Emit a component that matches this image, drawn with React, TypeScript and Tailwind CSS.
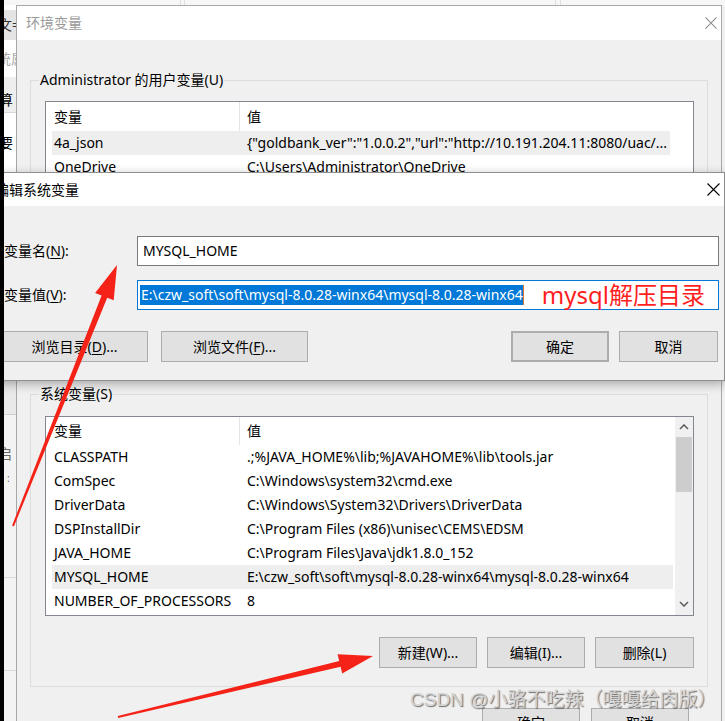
import React from 'react';

const ui = "font-['Noto_Sans','Noto_Sans_CJK_SC',sans-serif]";

const XIcon = ({ color = '#000', size = 13 }: { color?: string; size?: number }) => (
  <svg width={size} height={size} viewBox="0 0 13 13">
    <path d="M0.5 0.5 L12.5 12.5 M12.5 0.5 L0.5 12.5" stroke={color} strokeWidth="1.1" fill="none" />
  </svg>
);

const Chevron = ({ up }: { up?: boolean }) => (
  <svg width="10" height="6" viewBox="0 0 10 6">
    <polyline points={up ? '1,5 5,1 9,5' : '1,1 5,5 9,1'} stroke="#606060" strokeWidth="1.6" fill="none" />
  </svg>
);

const Btn = ({ children, className = '' }: { children: React.ReactNode; className?: string }) => (
  <div className={`flex items-center justify-center bg-[#e1e1e1] border border-[#adadad] text-[14px] leading-[18px] text-black ${className}`}>
    {children}
  </div>
);

type Row = { name: string; value: string; active?: boolean };

const userVars: Row[] = [
  { name: '4a_json', value: '{"goldbank_ver":"1.0.0.2","url":"http://10.191.204.11:8080/uac/...', active: true },
  { name: 'OneDrive', value: 'C:\\Users\\Administrator\\OneDrive' },
  { name: 'Path', value: 'C:\\Users\\Administrator\\AppData\\Local\\Microsoft\\WindowsApps;' },
  { name: 'TEMP', value: 'C:\\Users\\Administrator\\AppData\\Local\\Temp' },
];

const sysVars: Row[] = [
  { name: 'CLASSPATH', value: '.;%JAVA_HOME%\\lib;%JAVAHOME%\\lib\\tools.jar' },
  { name: 'ComSpec', value: 'C:\\Windows\\system32\\cmd.exe' },
  { name: 'DriverData', value: 'C:\\Windows\\System32\\Drivers\\DriverData' },
  { name: 'DSPInstallDir', value: 'C:\\Program Files (x86)\\unisec\\CEMS\\EDSM' },
  { name: 'JAVA_HOME', value: 'C:\\Program Files\\Java\\jdk1.8.0_152' },
  { name: 'MYSQL_HOME', value: 'E:\\czw_soft\\soft\\mysql-8.0.28-winx64\\mysql-8.0.28-winx64', active: true },
  { name: 'NUMBER_OF_PROCESSORS', value: '8' },
];

const VarList = ({ rows, headerH, scroll }: { rows: Row[]; headerH: string; scroll?: boolean }) => (
  <div className="flex h-[200px] border border-[#828790] bg-white overflow-hidden text-[14px] leading-[18px] text-black">
    <div className="flex-1 flex flex-col min-w-0">
      <div className={`flex items-stretch ${headerH}`}>
        <div className="w-[194px] pl-[8px] flex items-center border-r border-[#e5e5e5]">变量</div>
        <div className="pl-[7px] flex items-center">值</div>
      </div>
      {rows.map((r) => (
        <div key={r.name} className={`flex h-[24px] items-center ml-[6px] mr-[2px] whitespace-nowrap ${r.active ? 'bg-[#eeeeee]' : ''}`}>
          <div className="w-[188px] pl-[2px]">{r.name}</div>
          <div className="pl-[7px]">{r.value}</div>
        </div>
      ))}
    </div>
    {scroll ? (
      <div className="w-[18px] bg-[#f0f0f0] flex flex-col">
        <div className="h-[20px] flex items-center justify-center"><Chevron up /></div>
        <div className="h-[55px] mx-[1px] bg-[#cdcdcd]" />
        <div className="flex-1" />
        <div className="h-[22px] flex items-center justify-center"><Chevron /></div>
      </div>
    ) : (
      <div className="w-[21px]" />
    )}
  </div>
);

const BackWindow = () => (
  <>
    {/* strip above the windows */}
    <div className="absolute left-0 top-0 right-0 h-[5px] bg-[#f7f7f7] flex">
      <div className="w-[180px]" />
      <div className="w-[5px] border-l border-r border-[#e0e0e0]" />
      <div className="w-[370px]" />
      <div className="w-[6px] border-l border-r border-[#e0e0e0]" />
    </div>
    {/* window peeking out on the left */}
    <div className={`absolute left-[4px] top-[5px] bottom-0 w-[13px] flex flex-col overflow-hidden text-[14px] leading-[18px] ${ui}`}>
      <div className="h-[5px] bg-white" />
      <div className="h-[30px] bg-[#e4e4e4] flex items-center text-[#333] whitespace-nowrap"><span className="-ml-[6px]">文=</span></div>
      <div className="h-[37px] bg-white flex items-center text-[#aaa] whitespace-nowrap"><span className="-ml-[7px]">统属</span></div>
      <div className="h-[36px] bg-[#eeeeee] border-b border-[#d8d8d8] flex items-end pb-[3px] text-black whitespace-nowrap"><span className="-ml-[5px]">算</span></div>
      <div className="h-[60px] bg-white flex items-center text-black whitespace-nowrap"><span className="-ml-[5px]">要</span></div>
      <div className="h-[207px] bg-white" />
      <div className="h-[35px] bg-[#e9e9e9] border-b border-[#d0d0d0]" />
      <div className="h-[162px] bg-[#f3f3f3] flex flex-col text-[#666] whitespace-nowrap">
        <span className="mt-[30px] -ml-[6px]">启</span>
        <span className="mt-[6px] ml-[3px] text-[10px]">:</span>
      </div>
      <div className="h-[93px] bg-[#f3f3f3] border-t border-[#d8d8d8]" />
      <div className="flex-1 bg-[#f3f3f3] border-t border-[#d8d8d8]" />
    </div>
  </>
);

const EnvWindow = () => (
  <div className={`absolute left-[16px] top-[5px] w-[706px] h-[760px] border border-[#a8a8a8] bg-[#f0f0f0] flex flex-col ${ui}`}>
    <div className="h-[34px] bg-white flex items-center justify-between pl-[9px] pr-[4px]">
      <span className="text-[14px] leading-[18px] text-[#9a9a9a]">环境变量</span>
      <XIcon color="#8a8a8a" size={12} />
    </div>
    <div className="flex flex-col px-[13px]">
      <fieldset className="mt-[31px] h-[304px] border border-[#dcdcdc]">
        <legend className="ml-[8px] px-[1px] text-[14px] leading-[18px] text-black">Administrator 的用户变量(U)</legend>
        <div className="mt-[12px] pl-[14px] pr-[13px]">
          <VarList rows={userVars} headerH="h-[29px]" />
        </div>
      </fieldset>
      <fieldset className="mt-[10px] border border-[#dcdcdc] pb-[18px]">
        <legend className="ml-[8px] px-[1px] text-[14px] leading-[18px] text-black">系统变量(S)</legend>
        <div className="mt-[13px] pl-[14px] pr-[13px]">
          <VarList rows={sysVars} headerH="h-[28px]" scroll />
        </div>
        <div className="mt-[21px] flex justify-end gap-[10px] pr-[13px]">
          <Btn className="w-[98px] h-[31px]">新建(W)...</Btn>
          <Btn className="w-[98px] h-[31px]">编辑(I)...</Btn>
          <Btn className="w-[99px] h-[31px]">删除(L)</Btn>
        </div>
      </fieldset>
      <div className="mt-[21px] flex justify-end gap-[11px] pr-[19px]">
        <Btn className="w-[98px] h-[30px]">确定</Btn>
        <Btn className="w-[98px] h-[30px]">取消</Btn>
      </div>
    </div>
  </div>
);

const EditDialog = () => (
  <div className={`absolute left-[-8px] top-[172px] w-[733px] border border-[#8f8f8f] bg-[#f0f0f0] shadow-[0_3px_10px_rgba(0,0,0,0.3)] flex flex-col text-black ${ui}`}>
    <div className="h-[33px] bg-white flex items-center justify-between pl-[2px] pr-[4px]">
      <span className="text-[14px] leading-[18px]">编辑系统变量</span>
      <XIcon size={13} />
    </div>
    <div className="flex flex-col pt-[30px] pb-[18px] text-[14px] leading-[18px]">
      <div className="flex items-center h-[30px] pr-[5px]">
        <div className="w-[144px] pl-[11px]">变量名(<span className="underline underline-offset-2">N</span>):</div>
        <div className="flex-1 h-[30px] bg-white border border-[#7a7a7a] flex items-center pl-[5px]">MYSQL_HOME</div>
      </div>
      <div className="flex items-center h-[30px] mt-[14px] pr-[5px]">
        <div className="w-[144px] pl-[11px]">变量值(<span className="underline underline-offset-2">V</span>):</div>
        <div className="flex-1 h-[30px] bg-white border border-[#0078d7] flex items-center pl-[2px] whitespace-nowrap">
          <span className="bg-[#0078d7] text-white h-[20px] leading-[20px] pl-[1px]">E:\czw_soft\soft\mysql-8.0.28-winx64\mysql-8.0.28-winx64</span>
          <span className="w-[1px] h-[20px] bg-[#e0782a]" />
          <span className="ml-[18px] text-[24px] leading-[24px] text-[#ff1f1f]">mysql解压目录</span>
        </div>
      </div>
      <div className="flex items-center mt-[21px] pr-[6px]">
        <Btn className="ml-[8px] w-[147px] h-[31px]">浏览目录(<span className="underline underline-offset-2">D</span>)...</Btn>
        <Btn className="ml-[13px] w-[147px] h-[31px]">浏览文件(<span className="underline underline-offset-2">F</span>)...</Btn>
        <div className="flex-1" />
        <Btn className="w-[98px] h-[31px] border-2 border-[#0078d7]">确定</Btn>
        <Btn className="ml-[10px] w-[99px] h-[31px]">取消</Btn>
      </div>
    </div>
  </div>
);

const Arrows = () => (
  <svg className="absolute inset-0 pointer-events-none" width="725" height="721" viewBox="0 0 725 721">
    <polygon
      points="12.1,525.6 101.6,295.5 95.1,292.9 117,265 113.7,300.3 107.2,297.7 13.9,526.4"
      fill="#f52218"
    />
    <polygon
      points="117.8,716 339.2,661 337.6,654.2 373,656 342.2,673.6 340.6,666.8 118.2,718"
      fill="#f52218"
    />
  </svg>
);

export default function App() {
  return (
    <div className="relative w-[725px] h-[721px] overflow-hidden bg-[#f0f0f0]">
      <BackWindow />
      <EnvWindow />
      <EditDialog />
      <Arrows />
      <div className="absolute left-[410px] top-[688px] whitespace-nowrap text-[19px] leading-[24px] text-[#d4d4d4] [text-shadow:1px_1px_1px_rgba(0,0,0,0.55)] font-['Liberation_Sans','Noto_Sans_CJK_SC',sans-serif]">
        CSDN @小骆不吃辣（嘎嘎给肉版）
      </div>
      <div className="absolute left-0 top-0 bottom-0 w-[4px] bg-black" />
    </div>
  );
}
